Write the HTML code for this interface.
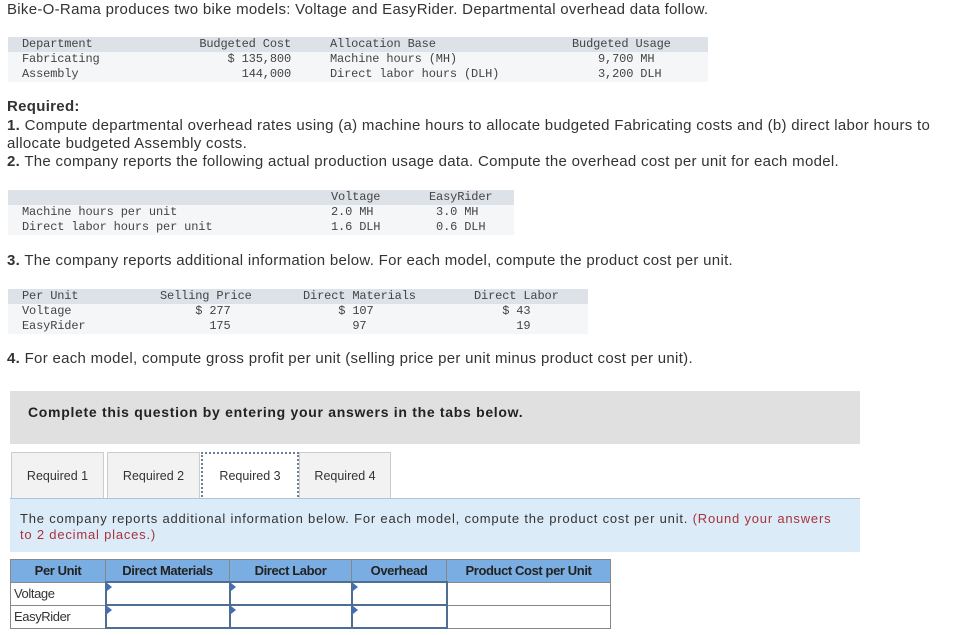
<!DOCTYPE html>
<html><head><meta charset="utf-8"><style>
body{margin:0;width:975px;height:635px;background:#fff;position:relative;font-family:"Liberation Sans",sans-serif;color:#333;overflow:hidden}
.a{position:absolute;white-space:nowrap}
.t{font-size:15px;letter-spacing:0.3px}
.m{font-family:"Liberation Mono",monospace;font-size:12px;letter-spacing:-0.15px;color:#444;line-height:15px}
.bar{position:absolute;height:15px}
.h{background:#dde1e8}.r{background:#f5f6f8}
.tab{position:absolute;top:452px;height:46px;background:#f2f2f2;border:1px solid #ccc;border-bottom:none;font-size:12.5px;line-height:46px;text-align:center;color:#333}
table{position:absolute;left:10px;top:559px;border-collapse:collapse;font-size:13px;letter-spacing:-0.4px;font-family:"Liberation Sans",sans-serif}
td,th{border:1px solid #888;height:21px;padding:0 3px}
th{background:#7aaee3;font-weight:bold;color:#222;text-align:center}
td.i{border:2px solid #4e6e93;position:relative}
td.i:before{content:"";position:absolute;left:0;top:0;border-left:5px solid #3f6fb8;border-top:4px solid transparent;border-bottom:4px solid transparent}
</style></head><body>
<div class="a t" style="left:7px;top:1px">Bike-O-Rama produces two bike models: Voltage and EasyRider. Departmental overhead data follow.</div>

<div class="bar h" style="left:8px;top:37px;width:700px"></div>
<div class="bar r" style="left:8px;top:52px;width:700px"></div>
<div class="bar r" style="left:8px;top:67px;width:700px"></div>
<div class="a m" style="left:22px;top:37px">Department<br>Fabricating<br>Assembly</div>
<div class="a m" style="right:684px;top:37px;text-align:right">Budgeted Cost<br>$ 135,800<br>144,000</div>
<div class="a m" style="left:330px;top:37px">Allocation Base<br>Machine hours (MH)<br>Direct labor hours (DLH)</div>
<div class="a m" style="left:572px;top:37px">Budgeted Usage</div>
<div class="a m" style="left:598px;top:52px">9,700 MH<br>3,200 DLH</div>

<div class="a t" style="left:7px;top:98px;font-weight:bold">Required:</div>
<div class="a t" style="left:7px;top:117px;line-height:18px;white-space:normal;width:945px"><b>1.</b> Compute departmental overhead rates using (a) machine hours to allocate budgeted Fabricating costs and (b) direct labor hours to allocate budgeted Assembly costs.<br><b>2.</b> The company reports the following actual production usage data. Compute the overhead cost per unit for each model.</div>

<div class="bar h" style="left:8px;top:190px;width:506px"></div>
<div class="bar r" style="left:8px;top:205px;width:506px"></div>
<div class="bar r" style="left:8px;top:220px;width:506px"></div>
<div class="a m" style="left:22px;top:205px">Machine hours per unit<br>Direct labor hours per unit</div>
<div class="a m" style="left:331px;top:190px">Voltage<br>2.0 MH<br>1.6 DLH</div>
<div class="a m" style="left:429px;top:190px">EasyRider<br>&nbsp;3.0 MH<br>&nbsp;0.6 DLH</div>

<div class="a t" style="left:7px;top:252px"><b>3.</b> The company reports additional information below. For each model, compute the product cost per unit.</div>

<div class="bar h" style="left:8px;top:289px;width:580px"></div>
<div class="bar r" style="left:8px;top:304px;width:580px"></div>
<div class="bar r" style="left:8px;top:319px;width:580px"></div>
<div class="a m" style="left:22px;top:289px">Per Unit<br>Voltage<br>EasyRider</div>
<div class="a m" style="left:160px;top:289px">Selling Price<br>&nbsp;&nbsp;&nbsp;&nbsp;&nbsp;$ 277<br>&nbsp;&nbsp;&nbsp;&nbsp;&nbsp;&nbsp;&nbsp;175</div>
<div class="a m" style="left:303px;top:289px">Direct Materials<br>&nbsp;&nbsp;&nbsp;&nbsp;&nbsp;$ 107<br>&nbsp;&nbsp;&nbsp;&nbsp;&nbsp;&nbsp;&nbsp;97</div>
<div class="a m" style="left:474px;top:289px">Direct Labor<br>&nbsp;&nbsp;&nbsp;&nbsp;$ 43<br>&nbsp;&nbsp;&nbsp;&nbsp;&nbsp;&nbsp;19</div>

<div class="a t" style="left:7px;top:350px"><b>4.</b> For each model, compute gross profit per unit (selling price per unit minus product cost per unit).</div>

<div class="a" style="left:10px;top:391px;width:850px;height:53px;background:#e0e0e0"></div>
<div class="a" style="left:28px;top:404px;font-size:14px;letter-spacing:0.7px;font-weight:bold;color:#222">Complete this question by entering your answers in the tabs below.</div>

<div class="tab" style="left:11px;width:91px">Required 1</div>
<div class="tab" style="left:107px;width:91px">Required 2</div>
<div class="tab" style="left:201px;width:94px;background:#fff;border:2px dotted #6b7f99;height:45px;line-height:45px">Required 3</div>
<div class="tab" style="left:299px;width:90px">Required 4</div>
<div class="a" style="left:10px;top:498px;width:850px;height:53px;background:#dcebf8;border-top:1px solid #a9c5e0"></div>
<div class="a" style="left:20px;top:511px;font-size:13px;letter-spacing:0.8px;line-height:16px;white-space:normal;width:825px;color:#333">The company reports additional information below. For each model, compute the product cost per unit. <span style="color:#a8333b">(Round your answers to 2 decimal places.)</span></div>

<table>
<tr><th style="width:88px">Per Unit</th><th style="width:117px">Direct Materials</th><th style="width:115px">Direct Labor</th><th style="width:88px">Overhead</th><th style="width:157px">Product Cost per Unit</th></tr>
<tr><td>Voltage</td><td class="i"></td><td class="i"></td><td class="i"></td><td></td></tr>
<tr><td>EasyRider</td><td class="i"></td><td class="i"></td><td class="i"></td><td></td></tr>
</table>
</body></html>
